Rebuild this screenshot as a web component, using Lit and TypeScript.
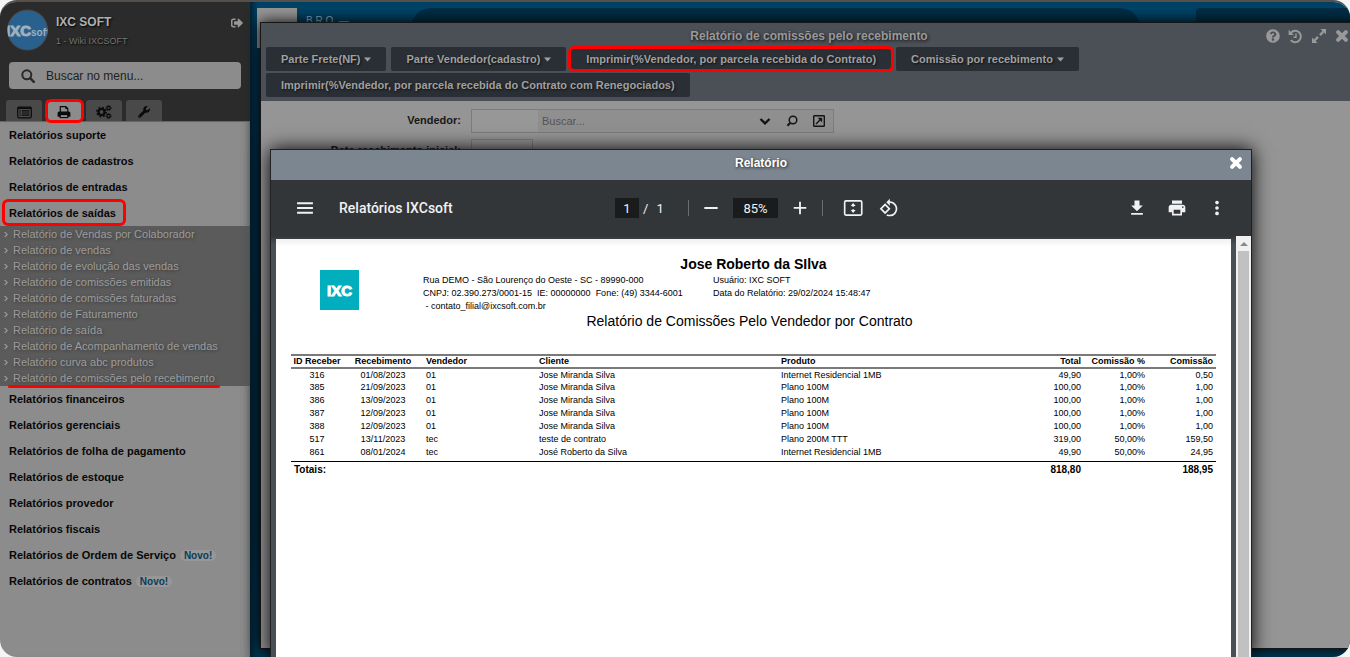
import { LitElement, html, css, svg, nothing } from "lit";
import { customElement, property } from "lit/decorators.js";

/* Shared reset used by every element of the desktop. */
const base = css`
  *, *::before, *::after { box-sizing: border-box; }
  button, input { font: inherit; color: inherit; border: 0; margin: 0; padding: 0; background: none; outline: none; border-radius: 0; }
  button { display: flex; align-items: center; justify-content: center; cursor: pointer; flex: none; }
  a { color: inherit; text-decoration: none; }
  svg { display: block; flex: none; }
`;

const icon = (size: number, box: string, body: unknown) =>
  html`<svg width=${size} height=${size} viewBox=${box} fill="currentColor" aria-hidden="true">${body}</svg>`;

const cross = svg`<path d="M3.500 3.500l9 9M12.500 3.500l-9 9" stroke="currentColor" stroke-width="4.600" stroke-linecap="round"/>`;

@customElement("side-menu")
class SideMenu extends LitElement {
  static styles = [base, css`
    :host { display: flex; flex-direction: column; width: 250px; flex: none; background: #8c8c8c; font-size: 11px; color: #080808; }
    .head { background: #2b2b2b; padding: 6px 9px 0 6px; border-bottom: 1px solid #666; }
    .user { display: flex; align-items: flex-start; gap: 7px; height: 52px; }
    .avatar { width: 43px; height: 43px; flex: none; }
    .who { flex: 1; padding-top: 7px; text-shadow: 1px 1px 2px #000; }
    .name { font-size: 12px; line-height: 14px; font-weight: bold; color: #b0b0b0; }
    .org { font-size: 9px; line-height: 12px; color: #747474; padding-top: 6px; height: 20px; }
    .exit { color: #989898; margin: 9px -2px 0 0; }
    .search { display: flex; align-items: center; height: 27px; margin: 2px 0 0 3px; border-radius: 4px; background: #8c8c8c; padding-left: 12px; gap: 11px; color: #2a2a2a; }
    .search input { flex: 1; min-width: 0; font-size: 12px; color: #222; }
    .search input::placeholder { color: #222; opacity: 1; }
    .tabs { display: flex; gap: 4px; padding-top: 11px; }
    .tab { width: 36px; height: 21px; background: #494949; border-radius: 3px 3px 0 0; color: #0a0a0a; padding-top: 3px; }
    .tab.on { background: #8c8c8c; position: relative; }
    .tab.on::after { content: ""; position: absolute; inset: -1px -2px -2px -1px; border: 3px solid #f00; border-radius: 6px; }
    nav { flex: 1; box-shadow: inset -8px 0 8px -8px #555; }
    .item { display: flex; align-items: center; gap: 4px; height: 26px; padding-left: 9px; font-weight: bold; }
    .item a { line-height: 26px; position: relative; }
    .item.marked a::after { content: ""; position: absolute; inset: -1px -10px 0 -7px; border: 3px solid #f00; border-radius: 6px; }
    .badge { font-size: 10px; line-height: 11px; padding: 0 4px; border-radius: 6px; background: #979797; color: #0b3d5c; }
    .sub { list-style: none; margin: 0; padding: 0; background: #5b5b5b; color: #9c9c9c; text-shadow: 1px 1px 3px #3a3a3a; }
    .sub li { display: flex; align-items: center; gap: 5px; height: 16px; padding-left: 3px; }
    .sub a { position: relative; line-height: 16px; }
    .sub li:last-child a::after { content: ""; position: absolute; inset: 15px -5px -3px -5px; height: 3px; border-radius: 2px; background: #f00; }
  `];

  private before = ["Relatórios suporte", "Relatórios de cadastros", "Relatórios de entradas", "Relatórios de saídas"];
  private sub = ["Relatório de Vendas por Colaborador", "Relatório de vendas", "Relatório de evolução das vendas",
    "Relatório de comissões emitidas", "Relatório de comissões faturadas", "Relatório de Faturamento", "Relatório de saída",
    "Relatório de Acompanhamento de vendas", "Relatório curva abc produtos", "Relatório de comissões pelo recebimento"];
  private after: [string, boolean][] = [["Relatórios financeiros", false], ["Relatórios gerenciais", false],
    ["Relatórios de folha de pagamento", false], ["Relatórios de estoque", false], ["Relatórios provedor", false],
    ["Relatórios fiscais", false], ["Relatórios de Ordem de Serviço", true], ["Relatórios de contratos", true]];

  private item(label: string, isNew: boolean, marked: boolean) {
    return html`<div class="item ${marked ? "marked" : ""}"><a href="#">${label}</a>${isNew ? html`<span class="badge">Novo!</span>` : nothing}</div>`;
  }

  render() {
    return html`
      <div class="head">
        <div class="user">
          <svg class="avatar" viewBox="0 0 43 43" aria-label="IXCsoft">
            <defs><clipPath id="round"><circle cx="21.5" cy="22" r="20"/></clipPath></defs>
            <circle cx="21.5" cy="22" r="20" fill="#28618e" stroke="#4c4c4c" stroke-width="1"/>
            <g clip-path="url(#round)" fill="#a2b0bb" font-family="Liberation Sans, sans-serif" font-weight="bold">
              <text x="0" y="28" font-size="15" stroke="#a2b0bb" stroke-width="1">IXC</text>
              <text x="25" y="28" font-size="10">soft</text>
            </g>
          </svg>
          <div class="who"><div class="name">IXC SOFT</div><div class="org">1 - Wiki IXCSOFT</div></div>
          <button class="exit" aria-label="Sair">${icon(12, "0 0 512 512", svg`<path d="M497 273L329 441c-15 15-41 4.5-41-17v-96H152c-13.300 0-24-10.700-24-24v-96c0-13.300 10.700-24 24-24h136V88c0-21.400 25.900-32 41-17l168 168c9.300 9.400 9.300 24.600 0 34zM192 436v-40c0-6.600-5.400-12-12-12H96c-17.700 0-32-14.300-32-32V160c0-17.700 14.300-32 32-32h84c6.600 0 12-5.400 12-12V76c0-6.600-5.400-12-12-12H96c-53 0-96 43-96 96v192c0 53 43 96 96 96h84c6.600 0 12-5.400 12-12z"/>`)}</button>
        </div>
        <label class="search">
          ${icon(14, "0 0 14 14", svg`<circle cx="5.800" cy="5.800" r="4.500" fill="none" stroke="currentColor" stroke-width="2"/><path d="M9.200 9.200l3.600 3.600" stroke="currentColor" stroke-width="2.400" stroke-linecap="round"/>`)}
          <input type="text" aria-label="Buscar no menu" placeholder="Buscar no menu..." />
        </label>
        <div class="tabs">
          <button class="tab" aria-label="Menu">${icon(15, "0 0 15 15", svg`<rect x=".7" y="2.200" width="13.600" height="10.600" rx="1.200" fill="none" stroke="currentColor" stroke-width="1.200"/><path d="M1 3.200h13" stroke="currentColor" stroke-width="1.500"/><path d="M2.500 5.800h1.200M2.500 8h1.200M2.500 10.200h1.200M4.800 5.800h7.700M4.800 8h7.700M4.800 10.200h7.700" stroke="currentColor" stroke-width="1.200"/>`)}</button>
          <button class="tab on" aria-label="Relatórios">${icon(14, "0 0 14 14", svg`<path d="M3.300 7V1.600h5.500l2 2V7" fill="none" stroke="currentColor" stroke-width="1.200"/><path d="M8.300 1.200v2.900h2.900z"/><path d="M2.300 6.400h9.400c1 0 1.700.8 1.700 1.700v3.700H.6V8.100c0-.9.7-1.700 1.700-1.700z"/><rect x="3.200" y="9.600" width="7.600" height="3" fill="#8c8c8c" stroke="currentColor" stroke-width="1.100"/>`)}</button>
          <button class="tab" aria-label="Configurações">${icon(16, "0 0 16 16", svg`<g fill="none" stroke="currentColor"><circle cx="5.500" cy="8" r="3" stroke-width="2.200"/><circle cx="5.500" cy="8" r="4.600" stroke-width="1.600" stroke-dasharray="1.806 1.806"/><circle cx="12.600" cy="4" r="1.600" stroke-width="1.200"/><circle cx="12.600" cy="4" r="2.500" stroke-width="1" stroke-dasharray="1.122 1.122"/><circle cx="12.600" cy="12" r="1.600" stroke-width="1.200"/><circle cx="12.600" cy="12" r="2.500" stroke-width="1" stroke-dasharray="1.122 1.122"/></g>`)}</button>
          <button class="tab" aria-label="Ferramentas">${icon(12, "0 0 512 512", svg`<path d="M507.730 109.100c-2.240-9.030-13.540-12.090-20.120-5.510l-74.360 74.360-67.880-11.310-11.310-67.880 74.360-74.360c6.620-6.620 3.430-17.900-5.660-20.160-47.380-11.740-99.550.91-136.580 37.930-39.640 39.640-50.550 97.100-34.050 147.200L18.740 402.760c-24.990 24.990-24.990 65.510 0 90.500 24.990 24.990 65.510 24.990 90.500 0l213.210-213.210c50.120 16.710 107.470 5.680 147.370-34.220 37.070-37.070 49.700-89.320 37.910-136.730zM64 472c-13.250 0-24-10.750-24-24 0-13.260 10.750-24 24-24s24 10.740 24 24c0 13.250-10.750 24-24 24z"/>`)}</button>
        </div>
      </div>
      <nav>
        ${this.before.map((t, i) => this.item(t, false, i === 3))}
        <ul class="sub">
          ${this.sub.map((t) => html`<li>${icon(5, "0 0 5 5", svg`<path d="M1-.8L4.200 2.500 1 5.800" fill="none" stroke="currentColor" stroke-width="1.100"/>`)}<a href="#">${t}</a></li>`)}
        </ul>
        ${this.after.map(([t, n]) => this.item(t, n, false))}
      </nav>`;
  }
}

@customElement("commission-window")
class CommissionWindow extends LitElement {
  static styles = [base, css`
    :host { display: block; background: #959595; border: 1px solid #161616; box-shadow: 0 0 14px #000; font-size: 11px; }
    header { background: #4b4f56; height: 78px; padding: 0 5px; }
    .bar { display: grid; grid-template-columns: 1fr auto 1fr; align-items: center; height: 24px; color: #999; }
    h2 { margin: 0; padding-top: 2px; font-size: 12px; line-height: 22px; text-shadow: 1px 1px 3px #111; }
    .tools { display: flex; justify-content: flex-end; align-items: center; gap: 8px; padding: 2px 3px 0 0; }
    .actions { display: flex; flex-wrap: wrap; gap: 2px 5px; margin-right: 8px; }
    .action { height: 24px; padding: 0 15px; background: #2a2f35; color: #a0a0a0; font-weight: bold; border-radius: 2px; gap: 4px; text-shadow: 1px 1px 2px #111; }
    .action.marked { height: 26px; margin: -1px -3px; border: 3px solid #f00; border-radius: 6px; }
    form { padding: 8px 0; display: grid; grid-template-columns: 200px auto; gap: 6px 10px; }
    form label { text-align: right; font-weight: bold; color: #181818; line-height: 22px; }
    .combo { display: flex; width: 363px; height: 24px; border: 1px solid #7c7c7c; color: #141414; background: #8f8f8f; }
    .code { width: 66px; background: #979797; }
    .find { flex: 1; min-width: 0; padding-left: 4px; }
    .find::placeholder { color: #555; opacity: 1; }
    .combo button { width: 27px; }
    .combo button:last-child { margin-right: 1px; }
    .date { width: 62px; height: 24px; border: 1px solid #7c7c7c; }
  `];

  private action(label: string, caret = false, marked = false) {
    return html`<button class="action ${marked ? "marked" : ""}">${label}${caret ? icon(7, "0 0 7 4", svg`<path d="M0 0h7L3.500 4z"/>`) : nothing}</button>`;
  }

  render() {
    return html`
      <header>
        <div class="bar">
          <span></span>
          <h2>Relatório de comissões pelo recebimento</h2>
          <div class="tools">
            <button aria-label="Ajuda">${icon(14, "0 0 512 512", svg`<path d="M504 256c0 136.997-111.043 248-248 248S8 392.997 8 256C8 119.083 119.043 8 256 8s248 111.083 248 248zM262.655 90c-54.497 0-89.255 22.957-116.549 63.758-3.536 5.286-2.353 12.415 2.715 16.258l34.699 26.310c5.205 3.947 12.621 3.008 16.665-2.122 17.864-22.658 30.113-35.797 57.303-35.797 20.429 0 45.698 13.148 45.698 32.958 0 14.976-12.363 22.667-32.534 33.976C247.128 238.528 216 254.941 216 296v4c0 6.627 5.373 12 12 12h56c6.627 0 12-5.373 12-12v-1.333c0-28.462 83.186-29.647 83.186-106.667 0-58.002-60.165-102-116.531-102zM256 338c-25.365 0-46 20.635-46 46 0 25.364 20.635 46 46 46s46-20.636 46-46c0-25.365-20.635-46-46-46z"/>`)}</button>
            <button aria-label="Histórico">${icon(15, "0 0 15 15", svg`<g fill="none" stroke="currentColor"><path d="M3 3.600a5.700 5.700 0 1 1-.2 7.600" stroke-width="2"/><path d="M8 4.500v3.700H5.500" stroke-width="1.400"/></g><path d="M.6.800v5.300h5.300z"/>`)}</button>
            <button aria-label="Maximizar">${icon(16, "0 0 16 16", svg`<path d="M9.500 1H15v5.500l-1.900-1.900-3.300 3.300-1.700-1.700 3.300-3.300zM6.500 15H1V9.500l1.900 1.900 3.300-3.300 1.700 1.700-3.300 3.300z"/>`)}</button>
            <button aria-label="Fechar">${icon(14, "0 0 16 16", cross)}</button>
          </div>
        </div>
        <div class="actions">
          ${this.action("Parte Frete(NF)", true)}
          ${this.action("Parte Vendedor(cadastro)", true)}
          ${this.action("Imprimir(%Vendedor, por parcela recebida do Contrato)", false, true)}
          ${this.action("Comissão por recebimento", true)}
          ${this.action("Imprimir(%Vendedor, por parcela recebida do Contrato com Renegociados)")}
        </div>
      </header>
      <form>
        <label for="code">Vendedor:</label>
        <div class="combo">
          <input class="code" id="code" type="text" />
          <input class="find" type="text" aria-label="Buscar vendedor" placeholder="Buscar..." />
          <button type="button" aria-label="Abrir lista">${icon(12, "0 0 12 12", svg`<path d="M1.500 4L6 8.300 10.500 4" fill="none" stroke="currentColor" stroke-width="2.400"/>`)}</button>
          <button type="button" aria-label="Pesquisar">${icon(12, "0 0 12 12", svg`<circle cx="7" cy="5" r="3.800" fill="none" stroke="currentColor" stroke-width="1.500"/><path d="M4.200 8L1.400 10.800" stroke="currentColor" stroke-width="2"/>`)}</button>
          <button type="button" aria-label="Abrir cadastro">${icon(12, "0 0 12 12", svg`<rect x=".7" y=".7" width="10.600" height="10.600" rx=".6" fill="none" stroke="currentColor" stroke-width="1.400"/><path d="M3 9l5-5" stroke="currentColor" stroke-width="1.400"/><path d="M4.600 2.800h4.600v4.600z"/>`)}</button>
        </div>
        <label for="date">Data recebimento inicial:</label>
        <input class="date" id="date" type="text" />
      </form>`;
  }
}

@customElement("report-window")
class ReportWindow extends LitElement {
  static styles = [base, css`
    :host { display: flex; flex-direction: column; border: 1px solid #202124; border-bottom: 0; box-shadow: 0 0 18px #000; background: #4a4f53; color: #000; }
    header { display: grid; grid-template-columns: 1fr auto 1fr; height: 30px; background: #7c8690; color: #fff; padding: 0 8px; }
    h2 { margin: 0; font-size: 12px; line-height: 26px; text-shadow: 1px 1px 3px #222; }
    .close { justify-self: end; height: 26px; }
    .viewer { display: flex; align-items: center; height: 56px; background: #323639; color: #f1f1f1; font-family: Roboto, sans-serif; font-size: 14px; padding: 0 16px; }
    .left, .right { flex: 1; display: flex; align-items: center; }
    .left { gap: 16px; }
    .right { gap: 4px; justify-content: flex-end; }
    .doc { font-weight: 500; }
    .mid { display: flex; align-items: center; }
    .mid input { height: 20px; background: #191b1c; text-align: center; font-size: 13px; }
    .pages { display: flex; align-items: center; width: 73px; gap: 4px; font-size: 13px; }
    .pages input { width: 24px; }
    .pages span:last-child { padding-left: 4px; }
    .zoom { display: flex; align-items: center; gap: 4px; padding: 0 4px; border: solid #6a6d6f; border-width: 0 1px; height: 16px; margin-right: 12px; }
    .zoom input { width: 45px; }
    .ib { width: 36px; height: 36px; }
    .canvas { flex: 1; display: flex; background: linear-gradient(#323639, #4a4f53 8px); min-height: 0; }
    .sheet { flex: 1; margin: 3px 5px 0; background: linear-gradient(#f0f0f0, #fff 8px); padding: 16px 15px; }
    .scroll { width: 15px; background: #f1f1f1; padding: 4px 2px 0; display: flex; flex-direction: column; align-items: center; gap: 3px; }
    .thumb { flex: 1; width: 11px; background: #c1c1c1; }
    h1 { margin: 0 0 1px; font-size: 14px; line-height: 18px; text-align: center; }
    .meta { display: grid; grid-template-columns: 132px 290px auto; font-size: 9px; line-height: 13px; }
    .meta p { margin: 0; white-space: pre; }
    .logo { margin: -4px 0 0 29px; }
    h3 { margin: 0 8px 0 0; font-size: 14px; line-height: 16px; font-weight: normal; text-align: center; }
    table { width: 100%; margin-top: 25px; border-collapse: collapse; table-layout: fixed; font-size: 9px; line-height: 13px; }
    th, td { padding: 0 3px; text-align: left; white-space: nowrap; }
    th { line-height: 11px; }
    thead tr { border-top: 2px solid #7a7a7a; border-bottom: 2px solid #7a7a7a; }
    tbody tr:first-child td { line-height: 12px; }
    tbody tr:last-child td { padding-bottom: 2px; }
    tfoot tr { border-top: 1px solid #000; }
    tfoot td { font-size: 10px; font-weight: bold; line-height: 15px; }
    .mc { text-align: center; padding: 0; }
    .r { text-align: right; }
    .c0 { width: 52px; } .c1 { width: 80px; } .c2 { width: 113px; } .c3 { width: 242px; }
    .c5 { width: 81px; } .c6 { width: 64px; } .c7 { width: 68px; }
  `];

  @property({ attribute: false }) rows: string[][] = [
    ["316", "01/08/2023", "01", "Jose Miranda Silva", "Internet Residencial 1MB", "49,90", "1,00%", "0,50"],
    ["385", "21/09/2023", "01", "Jose Miranda Silva", "Plano 100M", "100,00", "1,00%", "1,00"],
    ["386", "13/09/2023", "01", "Jose Miranda Silva", "Plano 100M", "100,00", "1,00%", "1,00"],
    ["387", "12/09/2023", "01", "Jose Miranda Silva", "Plano 100M", "100,00", "1,00%", "1,00"],
    ["388", "12/09/2023", "01", "Jose Miranda Silva", "Plano 100M", "100,00", "1,00%", "1,00"],
    ["517", "13/11/2023", "tec", "teste de contrato", "Plano 200M TTT", "319,00", "50,00%", "159,50"],
    ["861", "08/01/2024", "tec", "José Roberto da Silva", "Internet Residencial 1MB", "49,90", "50,00%", "24,95"],
  ];
  private cols = ["ID Receber", "Recebimento", "Vendedor", "Cliente", "Produto", "Total", "Comissão %", "Comissão"];
  private align = (i: number) => (i < 2 ? "mc" : i > 4 ? "r" : "");
  private tool(label: string, body: unknown) {
    return html`<button class="ib" aria-label=${label}>${icon(20, "0 0 24 24", body)}</button>`;
  }

  render() {
    return html`
      <header><span></span><h2>Relatório</h2><button class="close" aria-label="Fechar">${icon(14, "0 0 16 16", cross)}</button></header>
      <div class="viewer">
        <div class="left">${this.tool("Menu", svg`<path d="M2.500 5h19v2.400h-19zM2.500 10.800h19v2.400h-19zM2.500 16.600h19V19h-19z"/>`)}<span class="doc">Relatórios IXCsoft</span></div>
        <div class="mid">
          <div class="pages"><input type="text" aria-label="Página" .value=${"1"} /><span>/</span><span>1</span></div>
          <div class="zoom">
            ${this.tool("Diminuir", svg`<path d="M4 10.900h16v2.200H4z"/>`)}
            <input type="text" aria-label="Zoom" .value=${"85%"} />
            ${this.tool("Aumentar", svg`<path d="M19.500 13h-6.400v6.500h-2.200V13H4.500v-2.200h6.400V4.500h2.200v6.300h6.400z"/>`)}
          </div>
          ${this.tool("Ajustar à página", svg`<rect x="2" y="3.500" width="20.500" height="17" rx="1.500" fill="none" stroke="currentColor" stroke-width="2"/><path d="M12.200 6l3 3.600h-6zM12.200 18l3-3.600h-6z"/><path d="M11.200 9h2v1.500h-2zM11.200 13.500h2V15h-2z"/>`)}
          ${this.tool("Girar", svg`<path d="M7.340 6.410L.86 12.900l6.490 6.480 6.490-6.480-6.500-6.490zM3.690 12.900l3.660-3.660L11 12.900l-3.660 3.660-3.650-3.660zm15.670-6.260C17.610 4.880 15.300 4 13 4V.76L8.760 5 13 9.240V6c1.790 0 3.580.68 4.950 2.050 2.730 2.730 2.730 7.170 0 9.900C16.580 19.320 14.790 20 13 20c-.97 0-1.940-.21-2.840-.61l-1.490 1.490C10.020 21.620 11.510 22 13 22c2.300 0 4.610-.88 6.360-2.640 3.520-3.510 3.520-9.210 0-12.720z"/>`)}
        </div>
        <div class="right">
          ${this.tool("Baixar", svg`<path d="M19 9h-4V3H9v6H5l7 7 7-7zM5 18v2h14v-2H5z"/>`)}
          ${this.tool("Imprimir", svg`<path d="M19 8H5c-1.660 0-3 1.340-3 3v6h4v4h12v-4h4v-6c0-1.660-1.340-3-3-3zm-3 11H8v-5h8v5zm3-7c-.55 0-1-.45-1-1s.45-1 1-1 1 .45 1 1-.45 1-1 1zm-1-9H6v4h12V3z"/>`)}
          ${this.tool("Mais", svg`<circle cx="12" cy="5.500" r="2.200"/><circle cx="12" cy="12" r="2.200"/><circle cx="12" cy="18.500" r="2.200"/>`)}
        </div>
      </div>
      <div class="canvas">
        <div class="sheet">
          <h1>Jose Roberto da SIlva</h1>
          <div class="meta">
            <svg class="logo" width="39" height="40" viewBox="0 0 39 40" aria-label="IXC"><rect width="39" height="40" fill="#00aebd"/><text x="19.500" y="26" text-anchor="middle" font-family="Liberation Sans, sans-serif" font-weight="bold" font-size="15" fill="#fff" stroke="#fff" stroke-width="1">IXC</text></svg>
            <div class="addr">
              <p>Rua DEMO - São Lourenço do Oeste - SC - 89990-000</p>
              <p>CNPJ: 02.390.273/0001-15  IE: 00000000  Fone: (49) 3344-6001</p>
              <p> - contato_filial@ixcsoft.com.br</p>
            </div>
            <div class="info"><p>Usuário: IXC SOFT</p><p>Data do Relatório: 29/02/2024 15:48:47</p></div>
          </div>
          <h3>Relatório de Comissões Pelo Vendedor por Contrato</h3>
          <table>
            <colgroup>${this.cols.map((_, i) => html`<col class="c${i}" />`)}</colgroup>
            <thead><tr>${this.cols.map((c, i) => html`<th class=${this.align(i)}>${c}</th>`)}</tr></thead>
            <tbody>${this.rows.map((r) => html`<tr>${r.map((c, i) => html`<td class=${this.align(i)}>${c}</td>`)}</tr>`)}</tbody>
            <tfoot><tr><td colspan="5">Totais:</td><td class="r">818,80</td><td></td><td class="r">188,95</td></tr></tfoot>
          </table>
        </div>
        <div class="scroll">${icon(8, "0 0 8 4", svg`<path d="M0 4h8L4 0z" fill="#8a8a8a"/>`)}<div class="thumb"></div></div>
      </div>`;
  }
}

@customElement("app-root")
class AppRoot extends LitElement {
  static styles = [base, css`
    :host { display: block; height: 100vh; background: #f5f5f5; font-family: "Liberation Sans", Arial, sans-serif; }
    .frame { display: flex; height: 100%; border-radius: 17px; overflow: hidden; border-top: 2px solid #56504d; position: relative; }
    .desktop { flex: 1; min-width: 0; background: linear-gradient(#00456a, #003450 60px, #003049 80%, #003c59); box-shadow: inset 8px 0 8px -6px #001522; display: flex; align-items: flex-start; padding: 6px 0 0 7px; }
    .tile { width: 40px; height: 40px; background: #969696; flex: none; }
    .brand { font-size: 10px; line-height: 12px; color: #8fa9ba; white-space: pre; padding: 7px 0 0 9px; width: 114px; flex: none; }
    .pill { flex: 1; height: 40px; border-radius: 20px; background: #002e46; }
    .panel { width: 154px; height: 40px; margin-left: 56px; border-radius: 4px 0 0 0; background: #002e46; }
    .under { position: absolute; left: 260px; right: -8px; top: 20px; bottom: 8px; }
    .over { position: absolute; left: 270px; right: 98px; top: 147px; bottom: 0; }
  `];

  render() {
    return html`
      <div class="frame">
        <side-menu></side-menu>
        <div class="desktop">
          <div class="tile"></div>
          <div class="brand">B R O  —</div>
          <div class="pill"></div>
          <div class="panel"></div>
        </div>
        <commission-window class="under"></commission-window>
        <report-window class="over"></report-window>
      </div>`;
  }
}
